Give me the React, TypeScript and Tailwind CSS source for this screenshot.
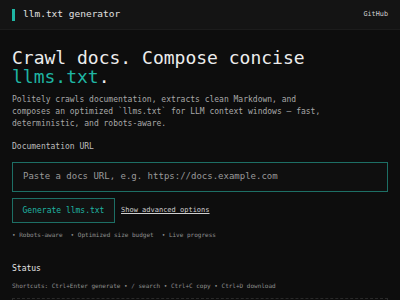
export default function App() {
  return (
    <div
      className="min-h-screen w-full bg-[#0d0d0d] text-[#e6e6e6]"
      style={{ fontFamily: "'DejaVu Sans Mono', 'Liberation Mono', monospace" }}
    >
      {/* Header */}
      <header className="h-[30px] flex items-center justify-between px-3 bg-[#141414] border-b border-[#1c1c1c]">
        <div className="flex items-center gap-[8px]">
          <span className="w-[3px] h-[12px] bg-[#1fb5a3]"></span>
          <span className="text-[9.5px] text-[#e0e0e0]">llm.txt generator</span>
        </div>
        <a className="text-[6.8px] text-[#d0d0d0]">GitHub</a>
      </header>

      <main className="px-3 pt-[18px]">
        <h1 className="text-[18px] leading-[19px] text-[#ececec]">
          <span className="block">Crawl docs. Compose concise</span>
          <span className="block">
            <span className="text-[#1fb5a3]">llms.txt</span>.
          </span>
        </h1>

        <p className="mt-[8px] text-[8px] leading-[12px] text-[#a8a8a8]">
          Politely crawls documentation, extracts clean Markdown, and
          <br />
          composes an optimized `llms.txt` for LLM context windows — fast,
          <br />
          deterministic, and robots-aware.
        </p>

        <label className="block mt-[11px] text-[8px] leading-[12px] text-[#bdbdbd]">
          Documentation URL
        </label>

        <div className="mt-[9px] h-[30px] flex items-center px-[10px] border-[1.5px] border-[#1d6f65] bg-[#0f0f0f]">
          <span className="text-[9px] text-[#9a9a9a]">Paste a docs URL, e.g. https://docs.example.com</span>
        </div>

        <div className="mt-[6px] flex items-center gap-[6px]">
          <button className="h-[25px] w-[103px] flex items-center justify-center border-[1.5px] border-[#1d6f65] bg-[#121212] text-[8px] text-[#1fb5a3]">
            Generate llms.txt
          </button>
          <span className="text-[7px] text-[#cfcfcf] underline">Show advanced options</span>
        </div>

        <div className="mt-[7px] flex gap-[8px] text-[6px] leading-[9px] text-[#8f8f8f]">
          <span>• Robots-aware</span>
          <span>• Optimized size budget</span>
          <span>• Live progress</span>
        </div>

        <h2 className="mt-[24px] text-[8px] leading-[12px] text-[#e6e6e6]">Status</h2>
        <p className="mt-[6px] text-[6px] leading-[9px] text-[#8f8f8f]">
          Shortcuts: Ctrl+Enter generate • / search • Ctrl+C copy • Ctrl+D download
        </p>
        <div className="mt-[8px] h-[40px] border border-dashed border-[#2a2a2a]"></div>
      </main>
    </div>
  );
}
